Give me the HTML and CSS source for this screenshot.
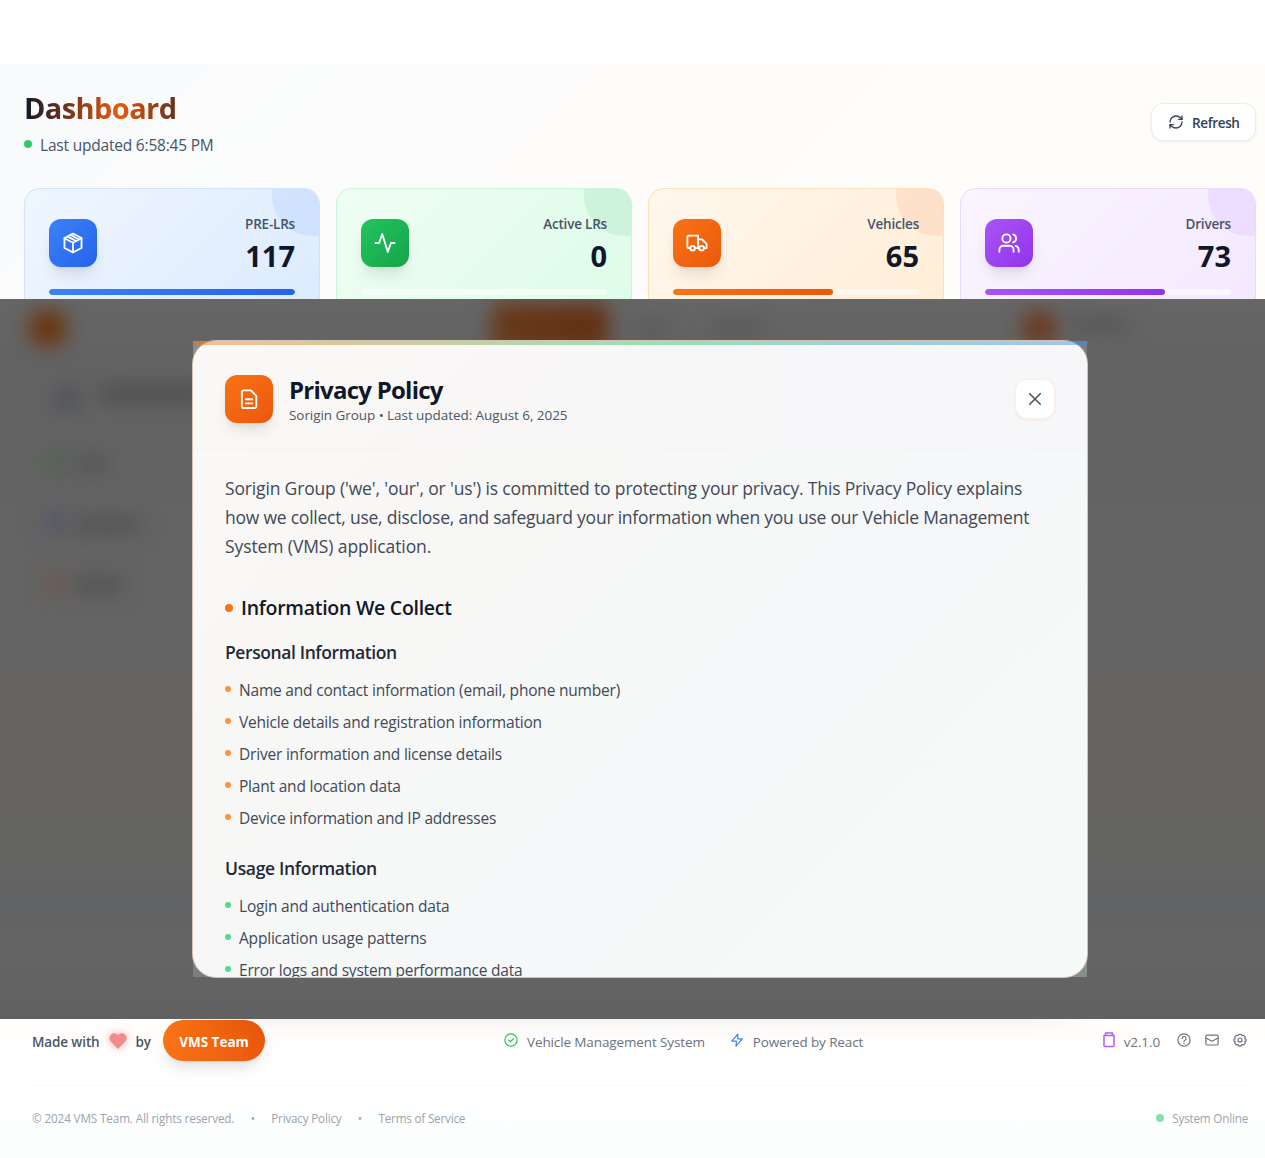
FILE: index.html
```html
<!DOCTYPE html>
<html lang="en">
<head>
<meta charset="utf-8">
<title>VMS Dashboard</title>
<link rel="stylesheet" href="styles.css">
</head>
<body>
<div class="shell">
  <main class="dashboard">
    <header class="page-head">
      <div class="page-title">
        <h1>Dashboard</h1>
        <p><i class="dot dot-live"></i><span>Last updated 6:58:45 PM</span></p>
      </div>
      <button class="refresh">
        <svg viewBox="0 0 24 24"><path d="M3 12a9 9 0 0 1 9-9 9.750 9.750 0 0 1 6.740 2.740L21 8"/><path d="M21 3v5h-5"/><path d="M21 12a9 9 0 0 1-9 9 9.750 9.750 0 0 1-6.740-2.740L3 16"/><path d="M8 16H3v5"/></svg>
        <span>Refresh</span>
      </button>
    </header>
    <section class="stats">
      <article class="card blue">
        <div class="card-top">
          <div class="tile"><svg viewBox="0 0 24 24"><path d="M12 1.800l9.300 4.700v11L12 22.200l-9.300-4.700v-11z"/><path d="M2.700 6.800L12 11.700l9.300-4.900M12 11.700v10.500M6.200 5l9.300 4.800M9.300 3.300l9.200 4.900"/></svg></div>
          <div class="figure"><span>PRE-LRs</span><strong>117</strong></div>
        </div>
        <div class="track"><div class="fill" style="width:100%"></div></div>
      </article>
      <article class="card green">
        <div class="card-top">
          <div class="tile"><svg viewBox="0 0 24 24"><path d="M1.500 12h4L9 2.200l6 19.600L18.500 12h4"/></svg></div>
          <div class="figure"><span>Active LRs</span><strong>0</strong></div>
        </div>
        <div class="track"><div class="fill" style="width:0%"></div></div>
      </article>
      <article class="card orange">
        <div class="card-top">
          <div class="tile"><svg viewBox="0 0 24 24"><path d="M4.300 17.500H3a1.500 1.500 0 0 1-1.500-1.500V5.500A1.500 1.500 0 0 1 3 4h10.200v13.500H10M13.200 8h4.300l5 5v4.500h-2.300M13.200 17.500h1"/><circle cx="7.200" cy="17.700" r="2.500"/><circle cx="17" cy="17.700" r="2.500"/></svg></div>
          <div class="figure"><span>Vehicles</span><strong>65</strong></div>
        </div>
        <div class="track"><div class="fill" style="width:65%"></div></div>
      </article>
      <article class="card purple">
        <div class="card-top">
          <div class="tile"><svg viewBox="0 0 24 24"><circle cx="9.200" cy="7" r="4.500"/><path d="M1.500 21.500v-2a4.500 4.500 0 0 1 4.500-4.500h6.500a4.500 4.500 0 0 1 4.500 4.500v2M16.500 2.700a4.500 4.500 0 0 1 0 8.600M22.600 21.500v-2a4.500 4.500 0 0 0-3.400-4.300"/></svg></div>
          <div class="figure"><span>Drivers</span><strong>73</strong></div>
        </div>
        <div class="track"><div class="fill" style="width:73%"></div></div>
      </article>
    </section>
  </main>

  <div class="overlay">
    <div class="backdrop">
      <i class="haze haze-logo"></i><i class="haze haze-pill"></i><i class="haze haze-nav1"></i><i class="haze haze-nav2"></i><i class="haze haze-avatar"></i><i class="haze haze-name"></i>
      <i class="haze haze-icon"></i><i class="haze haze-title"></i>
      <i class="haze haze-g"></i><i class="haze haze-g2"></i><i class="haze haze-b"></i><i class="haze haze-b2"></i><i class="haze haze-r"></i><i class="haze haze-r2"></i>
    </div>
    <div class="modal-frame" role="dialog" aria-label="Privacy Policy">
      <div class="modal">
        <header class="modal-head">
          <div class="tile tile-doc"><svg viewBox="0 0 24 24"><path d="M6 2.500h8l6 6V20a1.800 1.800 0 0 1-1.800 1.800H6A1.800 1.800 0 0 1 4.200 20V4.300A1.800 1.800 0 0 1 6 2.500zM8.500 12.300h7M8.500 16.800h7"/></svg></div>
          <div class="modal-title">
            <h2>Privacy Policy</h2>
            <p>Sorigin Group • Last updated: August 6, 2025</p>
          </div>
          <button class="close"><svg viewBox="0 0 24 24"><path d="M5 5l14 14M19 5L5 19"/></svg></button>
        </header>
        <div class="modal-body">
          <p class="lead"><span class="loose">Sorigin Group ('we', 'our', or 'us') is committed to protecting your privacy. This Privacy Policy explains</span><br>how we collect, use, disclose, and safeguard your information when you use our Vehicle Management<br><span class="looser">System (VMS) application.</span></p>
          <h3><i class="dot"></i><span>Information We Collect</span></h3>
          <h4>Personal Information</h4>
          <ul class="list list-orange">
            <li><span>Name and contact information (email, phone number)</span></li>
            <li><span>Vehicle details and registration information</span></li>
            <li><span>Driver information and license details</span></li>
            <li><span>Plant and location data</span></li>
            <li><span>Device information and IP addresses</span></li>
          </ul>
          <h4 class="next">Usage Information</h4>
          <ul class="list list-green">
            <li><span>Login and authentication data</span></li>
            <li><span>Application usage patterns</span></li>
            <li><span>Error logs and system performance data</span></li>
          </ul>
        </div>
      </div>
    </div>
  </div>

  <footer class="footer">
    <div class="foot-main">
      <div class="made">
        <span>Made with</span>
        <svg class="heart" viewBox="0 0 24 24"><path d="M12 22.500l-9.600-9.900A6.200 6.200 0 0 1 2.400 3.600a6.200 6.200 0 0 1 8.900 0l.7.800.7-.8a6.200 6.200 0 0 1 8.900 0 6.200 6.200 0 0 1 0 9z"/></svg>
        <span class="by">by</span>
        <span class="team">VMS Team</span>
      </div>
      <div class="tech">
        <svg class="ic-green" viewBox="0 0 24 24"><circle cx="12" cy="12" r="10.500"/><path d="M8 12l3 3 5.500-5.500"/></svg>
        <span class="vms">Vehicle Management System</span>
        <svg class="ic-blue" viewBox="0 0 24 24"><path d="M13.500 2L3 14h8l-.7 8.500L21.200 10h-8z"/></svg>
        <span class="react">Powered by React</span>
      </div>
      <div class="tools">
        <svg class="ic-purple" viewBox="0 0 12 16"><path d="M1 3.500h10v10a1 1 0 0 1-1 1H2a1 1 0 0 1-1-1zM2.500 3.500V1h7v2.500"/></svg>
        <span>v2.1.0</span>
        <svg viewBox="0 0 24 24"><circle cx="12" cy="12" r="10.500"/><path d="M8.600 9.500a3.500 3.500 0 1 1 5.200 3.100c-1.200.6-1.800 1-1.800 2M12 17.200v.8"/></svg>
        <svg viewBox="0 0 24 24"><rect x="1.500" y="3.500" width="21" height="17" rx="2"/><path d="M1.500 8.500l10.500 5.500 10.500-5.500"/></svg>
        <svg viewBox="0 0 24 24"><path d="M9.500 2.200h5l1 2.600 2.600-1 3 3.200-1.100 2.600 2.500 1.200v2.800l-2.500 1.200 1.100 2.600-3 3.200-2.600-1-1 2.600h-5l-1-2.600-2.600 1-3-3.200L4 14.800l-2.500-1.200v-2.800L4 9.600 2.900 7l3-3.200 2.600 1z"/><circle cx="12" cy="12" r="3.500"/></svg>
      </div>
    </div>
    <div class="foot-legal">
      <span class="copy">© 2024 VMS Team. All rights reserved.</span><b>•</b><span class="privacy">Privacy Policy</span><b>•</b><span class="terms">Terms of Service</span>
      <div class="status"><i class="dot"></i><span>System Online</span></div>
    </div>
  </footer>
</div>
</body>
</html>
```
FILE: styles.css
```css
* { box-sizing: border-box; margin: 0; padding: 0; }
html, body { height: 1158px; overflow: hidden; }
body { background: #fff; color: #0f172a; font-family: "Open Sans", "Noto Sans", sans-serif; }
.shell { width: 1280px; padding-top: 64px; }
svg { fill: none; stroke: currentColor; stroke-width: 2; stroke-linecap: round; stroke-linejoin: round; flex: none; }
span { white-space: nowrap; }
button { font: inherit; border: 0; }
.dot { display: block; width: 8px; height: 8px; border-radius: 50%; flex: none; }

.dashboard { height: 235px; padding: 24px; overflow: hidden; background: linear-gradient(135deg, #f8fafc 0%, #fdfcfb 40%, #fffdf8 100%); }
.page-head { display: flex; justify-content: space-between; align-items: center; height: 68px; margin-bottom: 32px; }
.page-title { width: 190px; }
h1 { padding-top: 1px; font-size: 29px; line-height: 40px; height: 40px; font-weight: 700; letter-spacing: -0.6px; color: transparent; background: linear-gradient(90deg, #0f172a 0%, #ea580c 50%, #0f172a 100%); background-clip: text; -webkit-background-clip: text; }
.page-title p { display: flex; align-items: center; gap: 8px; margin-top: 4px; font-size: 15.500px; line-height: 24px; letter-spacing: -0.2px; color: #475569; }
.page-title p span { padding-top: 2px; }
.dot-live { background: #34c96b; }
.refresh { display: flex; align-items: center; gap: 8px; width: 105px; height: 38px; padding: 0 16px; border: 1px solid #e8edf3; border-radius: 12px; background: #fff; color: #334155; font-size: 13.500px; font-weight: 600; letter-spacing: -0.35px; box-shadow: 0 1px 3px rgba(0,0,0,.06); }
.refresh svg { width: 16px; height: 16px; }
.refresh span { padding-top: 2px; }

.stats { display: grid; grid-template-columns: repeat(4, 296px); gap: 16px; }
.card { position: relative; height: 150px; padding: 24px; border: 1px solid; border-radius: 16px; overflow: hidden; }
.card::before { content: ""; position: absolute; top: -33px; right: -33px; width: 80px; height: 80px; border-radius: 50%; background: currentColor; opacity: .1; }
.blue { background: linear-gradient(135deg, #eff6ff, #dbeafe); border-color: #cfe3fc; color: #3b82f6; --a: #3b82f6; --b: #2563eb; }
.green { background: linear-gradient(135deg, #f0fdf4, #dcfce7); border-color: #c9f5d8; color: #16a34a; --a: #22c55e; --b: #16a34a; }
.orange { background: linear-gradient(135deg, #fff7ed, #ffedd5); border-color: #fddfbb; color: #f0642c; --a: #f97316; --b: #ea580c; }
.purple { background: linear-gradient(135deg, #faf5ff, #f3e8ff); border-color: #ead9fd; color: #a855f7; --a: #a855f7; --b: #9333ea; }
.card-top { display: flex; justify-content: space-between; align-items: center; height: 60px; }
.tile { display: grid; place-items: center; width: 48px; height: 48px; border-radius: 12px; color: #fff; background: linear-gradient(135deg, var(--a), var(--b)); box-shadow: 0 10px 15px -3px rgba(0,0,0,.1), 0 4px 6px -4px rgba(0,0,0,.1); flex: none; }
.tile svg { width: 22px; height: 22px; }
.figure { position: relative; padding-top: 1px; text-align: right; }
.figure span { display: block; font-size: 13.500px; line-height: 20px; font-weight: 600; letter-spacing: -0.2px; color: #475569; }
.figure strong { display: block; margin-top: 4px; font-size: 29px; line-height: 36px; color: #0f172a; }
.track { height: 6px; margin-top: 16px; border-radius: 3px; background: rgba(255,255,255,.5); overflow: hidden; }
.fill { height: 100%; border-radius: 3px; background: linear-gradient(90deg, var(--a), var(--b)); }

.overlay { position: relative; z-index: 2; display: flex; align-items: center; justify-content: center; height: 720px; }
.backdrop { position: absolute; inset: 0; overflow: hidden; background: linear-gradient(180deg, #666 0%, #636363 8%, #656464 45%, #656563 78%, #616264 84%, #656565 90%, #616161 100%); }
.haze { position: absolute; border-radius: 12px; filter: blur(10px); }
.haze-logo { left: 30px; top: 11px; width: 36px; height: 36px; background: #6b3510; }
.haze-pill { left: 491px; top: 4px; width: 118px; height: 48px; background: linear-gradient(90deg, #673a1a, #633013); }
.haze-nav1 { left: 634px; top: 22px; width: 38px; height: 14px; background: #585858; }
.haze-nav2 { left: 712px; top: 22px; width: 50px; height: 14px; background: #565656; }
.haze-avatar { left: 1022px; top: 12px; width: 34px; height: 34px; background: #6b3a20; }
.haze-name { left: 1070px; top: 18px; width: 60px; height: 15px; background: #565656; }
.haze-icon { left: 54px; top: 86px; width: 26px; height: 28px; background: #525459; }
.haze-title { left: 98px; top: 86px; width: 110px; height: 18px; background: #4f4f50; }
.haze-g { left: 44px; top: 153px; width: 22px; height: 22px; background: #4f624f; }
.haze-g2 { left: 74px; top: 159px; width: 36px; height: 12px; background: #505052; }
.haze-b { left: 44px; top: 213px; width: 22px; height: 22px; background: #51576a; }
.haze-b2 { left: 74px; top: 219px; width: 66px; height: 14px; background: #515152; }
.haze-r { left: 44px; top: 273px; width: 22px; height: 22px; background: #6e584c; }
.haze-r2 { left: 74px; top: 279px; width: 50px; height: 14px; background: #505053; }

.modal-frame { position: relative; width: 896px; height: 638px; padding: 1px; background: linear-gradient(135deg, #8e8c8a 0%, #7a7b7d 50%, #87908b 100%); background-clip: content-box; }
.modal-frame::before { content: ""; position: absolute; inset: 0; z-index: -1; border-radius: 24px; box-shadow: 0 25px 50px -12px rgba(0,0,0,.3); }
.modal-frame::after { content: ""; position: absolute; left: 1px; right: 0; top: 1px; height: 4px; background: linear-gradient(90deg, #f97316, #22c55e 50%, #3b82f6); opacity: .45; }
.modal { height: 638px; margin: -1px; border: 1px solid #d3c3b0; border-radius: 24px; overflow: hidden; background: linear-gradient(135deg, #faf9f7 0%, #f8f7f6 25%, #f6f7f8 55%, #f7faf9 100%); }
.modal-head { display: flex; align-items: center; height: 109px; padding: 8px 32px 0; border-bottom: 1px solid #faf1e9; background: linear-gradient(90deg, rgba(255,247,237,.1), rgba(248,246,252,.4)); }
.tile-doc { --a: #f97316; --b: #ea580c; }
.modal-title { margin-left: 16px; padding-top: 2px; }
h2 { font-size: 24px; line-height: 30px; font-weight: 700; letter-spacing: -0.75px; white-space: nowrap; }
.modal-title p { font-size: 13.500px; line-height: 20px; letter-spacing: -0.06px; color: #4b5563; white-space: nowrap; }
.close { display: grid; place-items: center; width: 40px; height: 40px; margin-left: auto; border: 1px solid #fdf1e5; border-radius: 12px; background: #fff; color: #4b5563; box-shadow: 0 1px 3px rgba(0,0,0,.06); }
.close svg { width: 18px; height: 18px; stroke-width: 2.200; }
.modal-body { padding: 24px 32px; color: #414957; }
.lead { font-size: 17.500px; line-height: 29px; height: 88px; letter-spacing: -0.23px; white-space: nowrap; }
.lead .loose { letter-spacing: -0.16px; }
.lead .looser { letter-spacing: -0.1px; }
h3 { display: flex; align-items: center; gap: 8px; margin-top: 32px; font-size: 19.500px; line-height: 28px; font-weight: 600; letter-spacing: -0.27px; color: #111827; }
h3 .dot { background: #f97316; }
h4 { margin-top: 16px; font-size: 17.500px; line-height: 28px; font-weight: 600; letter-spacing: -0.4px; color: #1f2937; }
h4.next { margin-top: 24px; letter-spacing: -0.33px; }
.list { display: grid; gap: 8px; margin-top: 12px; list-style: none; }
.list li { display: flex; gap: 8px; font-size: 15.500px; line-height: 24px; letter-spacing: -0.2px; }
.list li::before { content: ""; width: 6px; height: 6px; margin-top: 8px; border-radius: 50%; background: #fb923c; }
.list-green li::before { background: #4ade80; }

.footer { height: 139px; padding: 0 32px; background: linear-gradient(180deg, #fffefd 0%, #fff 50%, #fbfefd 100%); }
.foot-main { display: grid; grid-template-columns: 472px 1fr auto; align-items: start; height: 67px; border-bottom: 1px solid #fbf9f6; }
.made, .tech, .tools { display: flex; align-items: center; height: 44px; font-size: 13.500px; letter-spacing: -0.12px; color: #6b7280; }
.made > span:not(.team), .tech span, .tools span { padding-top: 2px; }
.made { font-weight: 600; color: #4b5563; letter-spacing: -0.12px; }
.heart { width: 18px; height: 18px; margin: 0 9px 1px; fill: #f48b8b; stroke: none; filter: drop-shadow(0 0 5px rgba(248,113,113,.6)); }
.team { display: grid; place-items: center; width: 102px; height: 41px; margin: -1px 0 0 12px; padding-top: 3px; border-radius: 21px; background: linear-gradient(90deg, #f97316, #ea580c); color: #fff; font-weight: 700; letter-spacing: 0; box-shadow: 0 10px 15px -3px rgba(0,0,0,.1), 0 4px 6px -4px rgba(0,0,0,.1); }
.tech svg, .tools svg { width: 14px; height: 14px; margin-bottom: 2px; }
.vms { margin: 0 25px 0 9px; }
.react { margin-left: 9px; }
.ic-green { color: #22c55e; }
.ic-blue { color: #3b82f6; }
.tools { margin-right: 1px; }
.tools svg + svg { margin-left: 14px; }
.tools span { margin: 0 17px 0 9px; }
.tools .ic-purple { width: 12px; height: 16px; margin-bottom: 3px; color: #b05cf8; stroke-width: 1.500; }
.foot-legal { display: flex; align-items: center; padding-top: 21px; font-size: 11.700px; line-height: 22px; letter-spacing: -0.13px; color: #9ca3af; }
.foot-legal b { width: 37px; text-align: center; font-weight: 400; }
.foot-legal .privacy, .foot-legal .terms { letter-spacing: -0.2px; }
.status { display: flex; align-items: center; gap: 8px; margin-left: auto; letter-spacing: -0.2px; }
.status .dot { background: #86e0aa; }
```
